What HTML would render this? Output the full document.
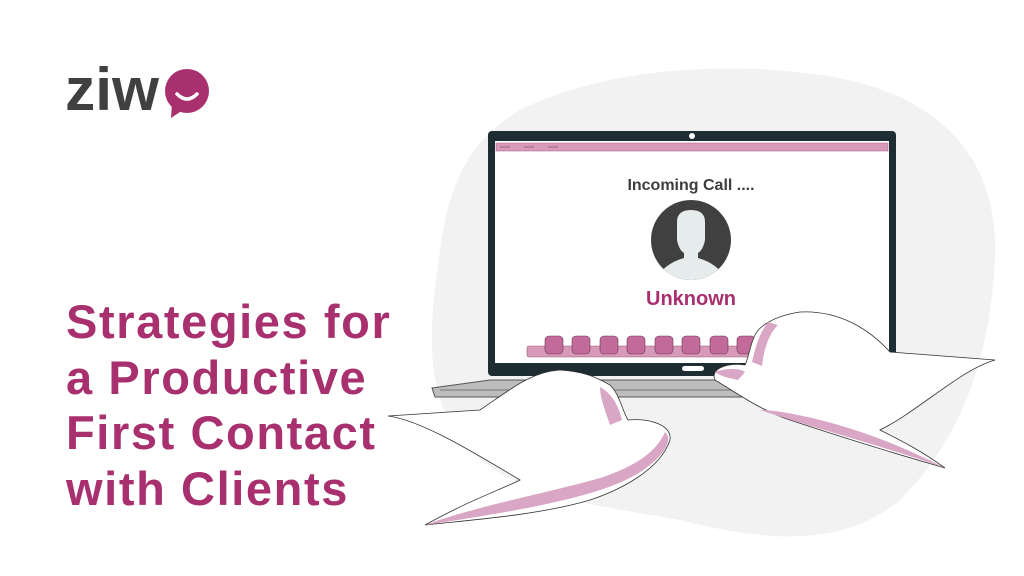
<!DOCTYPE html>
<html><head><meta charset="utf-8"><style>
html,body{margin:0;padding:0;background:#fff;}
body{width:1024px;height:576px;position:relative;overflow:hidden;font-family:"Liberation Sans",sans-serif;}
.title{position:absolute;left:66px;top:294px;color:#a8306f;font-weight:bold;font-size:47px;line-height:55.5px;letter-spacing:1.6px;}
</style></head><body>
<svg width="1024" height="576" style="position:absolute;left:0;top:0">
<path d="M520 110 C600 70 720 60 820 75 C930 90 1000 150 995 260 C990 360 960 440 900 500 C840 550 760 540 680 520 C600 505 520 500 470 450 C420 400 430 320 440 250 C450 180 470 140 520 110Z" fill="#f2f2f2"/>
<text x="65" y="110" font-family="Liberation Sans" font-weight="bold" font-size="60" fill="#404040" textLength="94" lengthAdjust="spacingAndGlyphs">ziw</text>
<circle cx="187" cy="91" r="22" fill="#a8306f"/>
<path d="M172 103 L171 118 L183 110Z" fill="#a8306f"/>
<path d="M177 94 Q187 104 197 94" stroke="#fff" stroke-width="3.5" fill="none" stroke-linecap="round"/>
<path d="M432 388 L490 380 L770 380 L770 397 L435 397 Z" fill="#bdbdbd" stroke="#555" stroke-width="1"/>
<line x1="440" y1="390" x2="770" y2="390" stroke="#777" stroke-width="1"/>
<rect x="488" y="131" width="408" height="245" rx="4" fill="#1e2d33"/>
<circle cx="692" cy="136" r="3" fill="#fff"/>
<rect x="495" y="141" width="394" height="222" fill="#fff"/>
<rect x="496" y="143" width="392" height="8" fill="#d79ab9" stroke="#b07090" stroke-width="0.6"/>
<line x1="500" y1="147" x2="510" y2="147" stroke="#a06080"/><line x1="524" y1="147" x2="534" y2="147" stroke="#a06080"/><line x1="548" y1="147" x2="558" y2="147" stroke="#a06080"/>
<rect x="682" y="366" width="22" height="5" rx="2.5" fill="#fff"/>
<text x="691" y="190" text-anchor="middle" font-family="Liberation Sans" font-weight="bold" font-size="16" fill="#3d3d3d">Incoming Call ....</text>
<clipPath id="c"><circle cx="691" cy="240" r="40"/></clipPath>
<circle cx="691" cy="240" r="40" fill="#404040"/>
<g clip-path="url(#c)"><path d="M677 222 Q677 210 691 210 Q705 210 705 222 L705 240 Q703 250 698 253 L698 258 Q720 264 730 285 L652 285 Q662 264 684 258 L684 253 Q679 250 677 240Z" fill="#e6eceb"/></g>
<text x="691" y="305" text-anchor="middle" font-family="Liberation Sans" font-weight="bold" font-size="20" fill="#a8306f">Unknown</text>
<rect x="527" y="346" width="240" height="11" rx="2" fill="#d79ab9" stroke="#9a5a7a" stroke-width="0.6"/>
<g fill="#c26a9a" stroke="#6a3a55" stroke-width="0.6">
<rect x="545" y="336" width="18" height="18" rx="4"/><rect x="572" y="336" width="18" height="18" rx="4"/><rect x="600" y="336" width="18" height="18" rx="4"/><rect x="627" y="336" width="18" height="18" rx="4"/><rect x="655" y="336" width="18" height="18" rx="4"/><rect x="682" y="336" width="18" height="18" rx="4"/><rect x="710" y="336" width="18" height="18" rx="4"/><rect x="737" y="336" width="18" height="18" rx="4"/>
</g>
<path d="M388 416 L480 410 C510 390 530 372 560 370 C590 372 600 380 610 385 C620 395 622 410 628 420 C650 418 672 425 670 440 C660 470 620 490 590 500 C540 515 470 520 425 525 C470 500 500 490 520 480 C470 450 420 420 388 416Z" fill="#fff" stroke="#333" stroke-width="0.8"/>
<path d="M425 525 C480 505 540 495 600 478 C630 468 655 455 665 432 C672 438 668 450 650 465 C620 490 560 505 425 525Z" fill="#d9a6c6"/>
<path d="M600 387 C615 395 620 412 622 420 L610 425 C605 410 600 398 600 387Z" fill="#d9a6c6"/>
<path d="M995 360 L890 352 C870 330 840 310 800 312 C775 316 760 325 755 335 C750 345 748 360 745 365 C725 362 710 370 715 380 C740 395 760 410 790 420 C850 440 900 455 945 468 C920 450 900 440 880 430 C920 410 960 370 995 360Z" fill="#fff" stroke="#333" stroke-width="0.8"/>
<path d="M760 410 C820 430 880 445 945 468 C900 445 860 430 820 420 C800 415 775 410 760 410Z" fill="#d9a6c6"/>
<path d="M768 322 C758 335 755 350 752 362 L762 366 C764 350 768 335 778 325Z" fill="#d9a6c6"/>
<path d="M715 372 C725 368 740 368 745 372 L738 380 C728 378 720 376 715 372Z" fill="#d9a6c6"/>
</svg>
<div class="title">Strategies for<br>a Productive<br>First Contact<br>with Clients</div>
</body></html>
